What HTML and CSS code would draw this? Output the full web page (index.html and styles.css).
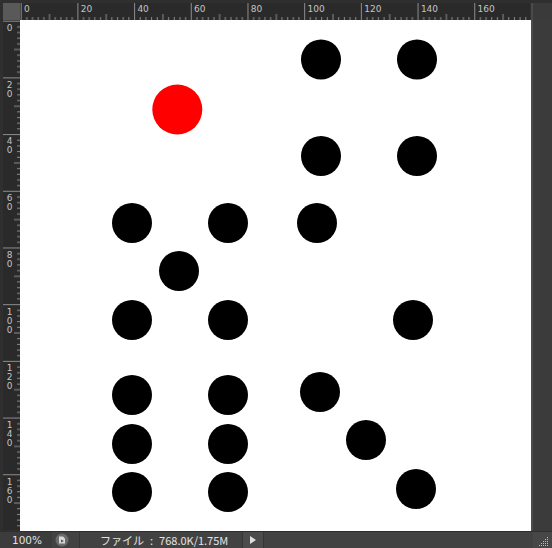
FILE: index.html
```html
<!DOCTYPE html>
<html>
<head>
<meta charset="utf-8">
<link rel="stylesheet" href="styles.css">
</head>
<body>
<div class="frame">
  <div class="corner"></div>
  <div class="hruler">
    <svg width="511" height="17" viewBox="0 0 511 17">
      <defs>
        <pattern id="ht" patternUnits="userSpaceOnUse" x="0.7" y="0" width="56.693" height="17">
          <g stroke="#8c8c8c" stroke-width="1">
            <line x1="0.5" y1="0" x2="0.5" y2="17"/>
            <line x1="6.17" y1="14" x2="6.17" y2="17"/>
            <line x1="11.84" y1="14" x2="11.84" y2="17"/>
            <line x1="17.5" y1="14" x2="17.5" y2="17"/>
            <line x1="23.18" y1="14" x2="23.18" y2="17"/>
            <line x1="28.85" y1="11" x2="28.85" y2="17"/>
            <line x1="34.5" y1="14" x2="34.5" y2="17"/>
            <line x1="40.2" y1="14" x2="40.2" y2="17"/>
            <line x1="45.85" y1="14" x2="45.85" y2="17"/>
            <line x1="51.5" y1="14" x2="51.5" y2="17"/>
          </g>
        </pattern>
      </defs>
      <rect width="511" height="17" fill="url(#ht)"/>
      <g class="rtext">
        <text x="4" y="9">0</text>
        <text x="60.7" y="9">20</text>
        <text x="117.4" y="9">40</text>
        <text x="174.1" y="9">60</text>
        <text x="230.8" y="9">80</text>
        <text x="287.5" y="9">100</text>
        <text x="344.2" y="9">120</text>
        <text x="400.9" y="9">140</text>
        <text x="457.6" y="9">160</text>
      </g>
    </svg>
  </div>
  <div class="rightstrip"></div>
  <div class="vruler">
    <svg width="17" height="511" viewBox="0 0 17 511">
      <defs>
        <pattern id="vt" patternUnits="userSpaceOnUse" x="0" y="0.7" width="17" height="56.693">
          <g stroke="#8c8c8c" stroke-width="1">
            <line y1="0.5" x1="0" y2="0.5" x2="17"/>
            <line y1="6.17" x1="14" y2="6.17" x2="17"/>
            <line y1="11.84" x1="14" y2="11.84" x2="17"/>
            <line y1="17.5" x1="14" y2="17.5" x2="17"/>
            <line y1="23.18" x1="14" y2="23.18" x2="17"/>
            <line y1="28.85" x1="11" y2="28.85" x2="17"/>
            <line y1="34.5" x1="14" y2="34.5" x2="17"/>
            <line y1="40.2" x1="14" y2="40.2" x2="17"/>
            <line y1="45.85" x1="14" y2="45.85" x2="17"/>
            <line y1="51.5" x1="14" y2="51.5" x2="17"/>
          </g>
        </pattern>
      </defs>
      <rect width="17" height="511" fill="url(#vt)"/>
      <g class="rtext vt">
        <text x="6.5" y="11">0</text>
        <text x="6.5" y="67.7">2</text><text x="6.5" y="76.7">0</text>
        <text x="6.5" y="124.4">4</text><text x="6.5" y="133.4">0</text>
        <text x="6.5" y="181.1">6</text><text x="6.5" y="190.1">0</text>
        <text x="6.5" y="237.8">8</text><text x="6.5" y="246.8">0</text>
        <text x="6.5" y="294.5">1</text><text x="6.5" y="303.5">0</text><text x="6.5" y="312.5">0</text>
        <text x="6.5" y="351.2">1</text><text x="6.5" y="360.2">2</text><text x="6.5" y="369.2">0</text>
        <text x="6.5" y="407.9">1</text><text x="6.5" y="416.9">4</text><text x="6.5" y="425.9">0</text>
        <text x="6.5" y="464.6">1</text><text x="6.5" y="473.6">6</text><text x="6.5" y="482.6">0</text>
      </g>
    </svg>
  </div>
  <div class="canvas">
    <svg width="511" height="511" viewBox="0 0 511 511">
      <rect width="511" height="511" fill="#fff"/>
      <g fill="#000">
        <circle cx="301" cy="39.5" r="20"/>
        <circle cx="397" cy="39.5" r="20"/>
        <circle cx="301" cy="136" r="20"/>
        <circle cx="397" cy="136" r="20"/>
        <circle cx="112" cy="203" r="20"/>
        <circle cx="208" cy="203" r="20"/>
        <circle cx="297" cy="203" r="20"/>
        <circle cx="159" cy="251" r="20"/>
        <circle cx="112" cy="300" r="20"/>
        <circle cx="208" cy="300" r="20"/>
        <circle cx="393" cy="300" r="20"/>
        <circle cx="112" cy="375" r="20"/>
        <circle cx="208" cy="375" r="20"/>
        <circle cx="300" cy="372" r="20"/>
        <circle cx="112" cy="424" r="20"/>
        <circle cx="208" cy="424" r="20"/>
        <circle cx="346" cy="420" r="20"/>
        <circle cx="112" cy="472" r="20"/>
        <circle cx="208" cy="472" r="20"/>
        <circle cx="396" cy="469" r="20"/>
      </g>
      <circle cx="157.3" cy="89.5" r="25" fill="#ff0000"/>
    </svg>
  </div>
  <div class="vscroll"></div>
  <div class="status">
    <div class="zoom">100%</div>
    <div class="docicon">
      <svg width="14" height="14" viewBox="0 0 14 14">
        <circle cx="7" cy="7" r="6.5" fill="#6a6a6a"/>
        <path d="M4 3.5h4l2 2v5H4z" fill="#d8d8d8"/>
        <path d="M6 6.5l3 1.5-3 1.5z" fill="#555"/>
      </svg>
    </div>
    <div class="info">ファイル<span class="colon">:</span>768.0K/1.75M</div>
    <div class="arrow">
      <svg width="8" height="10" viewBox="0 0 8 10"><path d="M1 1l6 4-6 4z" fill="#e0e0e0"/></svg>
    </div>
    <div class="rest"></div>
    <div class="grip">
      <svg width="19" height="17" viewBox="0 0 19 17">
        <g fill="#bdbdbd">
          <rect x="14" y="5" width="1" height="1"/>
          <rect x="12" y="7" width="1" height="1"/><rect x="14" y="7" width="1" height="1"/>
          <rect x="10" y="9" width="1" height="1"/><rect x="12" y="9" width="1" height="1"/><rect x="14" y="9" width="1" height="1"/>
          <rect x="8" y="11" width="1" height="1"/><rect x="10" y="11" width="1" height="1"/><rect x="12" y="11" width="1" height="1"/><rect x="14" y="11" width="1" height="1"/>
          <rect x="6" y="13" width="1" height="1"/><rect x="8" y="13" width="1" height="1"/><rect x="10" y="13" width="1" height="1"/><rect x="12" y="13" width="1" height="1"/><rect x="14" y="13" width="1" height="1"/>
        </g>
      </svg>
    </div>
  </div>
</div>
</body>
</html>
```
FILE: styles.css
```css
html, body {
  margin: 0;
  padding: 0;
  background: #2f2f2f;
}
.frame {
  width: 552px;
  height: 548px;
  box-sizing: border-box;
  padding: 3px 0 0 3px;
  display: grid;
  grid-template-columns: 17px 511px 21px;
  grid-template-rows: 17px 511px 17px;
  background: #2f2f2f;
  overflow: hidden;
}
.corner {
  background: #595959;
}
.hruler, .vruler {
  background: #2a2a2a;
  line-height: 0;
}
.hruler svg, .vruler svg, .canvas svg {
  display: block;
}
.rtext {
  font-family: "DejaVu Sans", sans-serif;
  font-size: 9px;
  fill: #c4c4c4;
}
.vt text {
  text-anchor: middle;
}
.rightstrip {
  background: #3a3a3a;
  border-left: 2px solid #4a4a4a;
}
.canvas {
  background: #fff;
  line-height: 0;
}
.vscroll {
  background: #3b3b3b;
  border-left: 2px solid #4b4b4b;
}
.status {
  grid-column: 1 / 4;
  margin-left: -3px;
  display: flex;
  align-items: center;
  background: #424242;
  border-top: 1px solid #2e2e2e;
  font-family: "Noto Sans CJK JP", "DejaVu Sans", sans-serif;
  font-size: 11px;
  color: #e2e2e2;
}
.zoom {
  width: 52px;
  height: 100%;
  box-sizing: border-box;
  padding-left: 12px;
  display: flex;
  align-items: center;
  font-family: "DejaVu Sans", sans-serif;
  font-size: 10.5px;
  background: #3c3c3c;
}
.docicon {
  width: 24px;
  height: 100%;
  display: flex;
  align-items: center;
  padding-left: 3px;
  border-right: 1px solid #353535;
}
.info {
  width: 160px;
  height: 100%;
  display: flex;
  align-items: center;
  padding-left: 20px;
  box-sizing: border-box;
  white-space: pre;
}
.colon {
  margin: 0 6px;
}
.arrow {
  width: 20px;
  height: 100%;
  display: flex;
  align-items: center;
  justify-content: center;
  background: #4c4c4c;
  border-left: 1px solid #363636;
  border-right: 1px solid #363636;
  margin-left: 2px;
}
.rest {
  flex: 1;
}
.grip {
  width: 19px;
  height: 100%;
  background: #474747;
  line-height: 0;
}
```
